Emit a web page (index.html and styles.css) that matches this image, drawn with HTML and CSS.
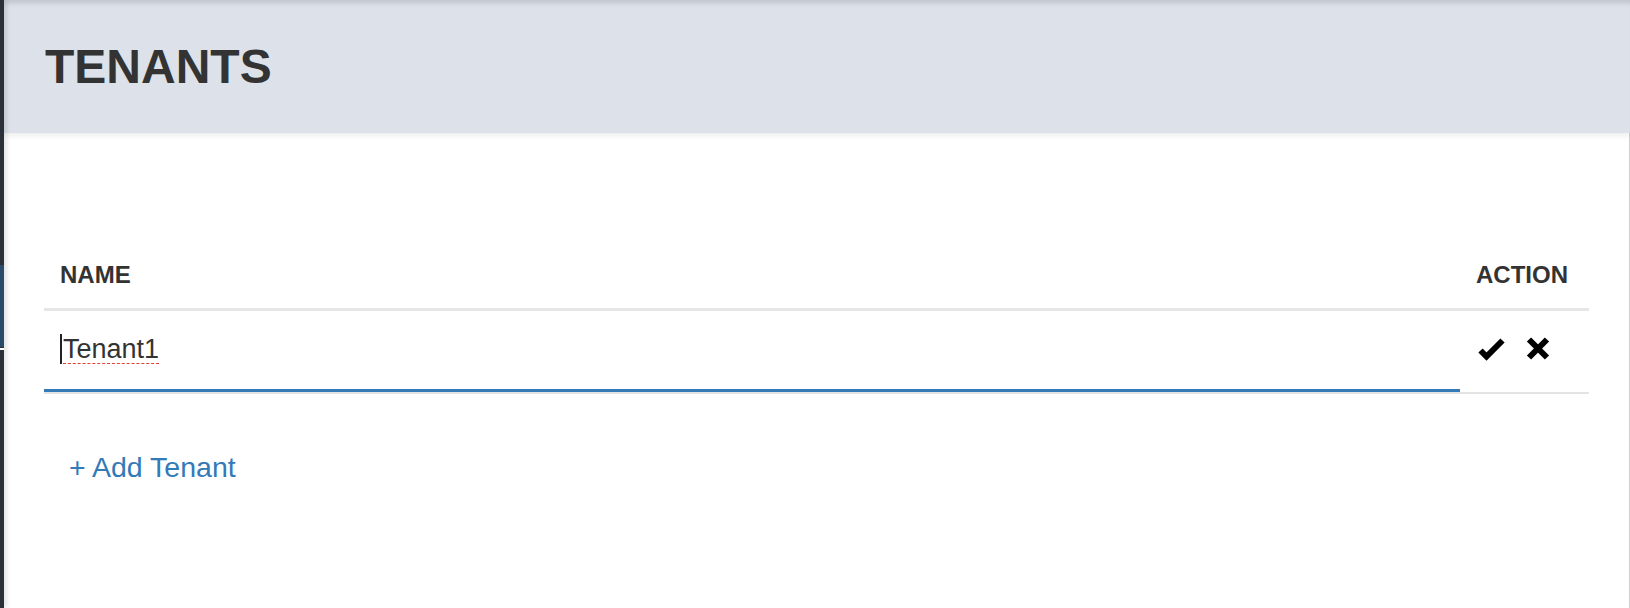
FILE: index.html
```html
<!DOCTYPE html>
<html lang="en">
<head>
<meta charset="utf-8">
<title>Tenants</title>
<link rel="stylesheet" href="styles.css">
</head>
<body>
<div class="app">
  <aside class="sidebar">
    <div class="seg seg-top"></div>
    <div class="seg seg-active"></div>
    <div class="seg seg-gap"></div>
    <div class="seg seg-line"></div>
    <div class="seg seg-rest"></div>
  </aside>
  <main class="main">
    <header class="page-header">
      <h1 class="page-title">TENANTS</h1>
    </header>
    <section class="content">
      <table class="tenants">
        <thead>
          <tr>
            <th class="col-name">NAME</th>
            <th class="col-action">ACTION</th>
          </tr>
        </thead>
        <tbody>
          <tr>
            <td class="cell-name">
              <div class="field"><span class="caret"></span><span class="misspelled">Tenant1</span></div>
            </td>
            <td class="cell-action">
              <div class="actions">
                <svg class="icon icon-ok" width="30" height="26" viewBox="0 0 30 26" aria-label="Save">
                  <polyline points="4.5,13.5 10.5,19.5 26.5,3.5" fill="none" stroke="#000" stroke-width="6" stroke-linejoin="miter" stroke-linecap="butt"/>
                </svg>
                <svg class="icon icon-remove" width="28" height="26" viewBox="0 0 28 26" aria-label="Cancel">
                  <line x1="5" y1="2.5" x2="23" y2="20.5" stroke="#000" stroke-width="6" stroke-linecap="butt"/>
                  <line x1="23" y1="2.5" x2="5" y2="20.5" stroke="#000" stroke-width="6" stroke-linecap="butt"/>
                </svg>
              </div>
            </td>
          </tr>
        </tbody>
      </table>
      <div class="add-row">
        <a class="add-link" href="#">+ Add Tenant</a>
      </div>
    </section>
  </main>
</div>
</body>
</html>
```
FILE: styles.css
```css
html, body {
  margin: 0;
  padding: 0;
  height: 100%;
}

body {
  font-family: "Liberation Sans", Arial, Helvetica, sans-serif;
  color: #333;
  background: #fff;
}

.app {
  display: flex;
  height: 608px;
  overflow: hidden;
}

.sidebar {
  width: 4px;
  flex: none;
  display: flex;
  flex-direction: column;
  background: #2b313b;
  position: relative;
  z-index: 2;
  box-shadow: 2px 0 5px rgba(0, 0, 0, 0.16);
}

.seg-top { height: 265px; }
.seg-active { height: 82px; background: #2c4b6b; }
.seg-gap { height: 1px; }
.seg-line { height: 2px; background: #fff; }
.seg-rest { flex: 1; }

.main {
  flex: 1;
  min-width: 0;
  display: flex;
  flex-direction: column;
}

.page-header {
  background: #dce1ea;
  padding: 40px 44px 39px 41px;
  position: relative;
  z-index: 1;
  box-shadow: inset 0 7px 5px -4px rgba(0, 0, 0, 0.13), 0 3px 5px rgba(0, 0, 0, 0.07);
}

.page-title {
  margin: 0;
  font-size: 48px;
  line-height: 54px;
  font-weight: 700;
  color: #333;
}

.content {
  flex: 1;
  border-right: 1px solid #cfcfcf;
  padding: 116px 40px 0 40px;
}

.tenants {
  width: 100%;
  border-collapse: collapse;
}

.tenants th {
  font-size: 24px;
  line-height: 28px;
  font-weight: 700;
  text-align: left;
  padding: 12px 16px 19px 16px;
  border-bottom: 3px solid #e6e6e6;
  color: #333;
}

.tenants th.col-action {
  width: 97px;
}

.tenants td {
  border-bottom: 2px solid #e4e4e4;
  vertical-align: top;
}

.cell-name {
  padding: 0;
}

.field {
  height: 30px;
  font-size: 27px;
  line-height: 30px;
  padding: 23px 16px 25px 16px;
  border-bottom: 3px solid #337ab7;
  color: #333;
  white-space: nowrap;
}

.caret {
  display: inline-block;
  width: 2px;
  height: 30px;
  background: #222;
  vertical-align: top;
  margin-right: 1px;
}

.misspelled {
  text-decoration: underline dashed #e0403a;
  text-decoration-thickness: 1px;
  text-underline-offset: 5px;
}

.cell-action {
  padding: 26px 16px 0 16px;
}

.actions {
  display: flex;
  align-items: flex-start;
  gap: 18px;
}

.icon {
  display: block;
  flex: none;
}

.add-row {
  padding: 57px 0 0 25px;
}

.add-link {
  display: inline-block;
  font-size: 28.5px;
  line-height: 32px;
  color: #337ab7;
  text-decoration: none;
}
```
